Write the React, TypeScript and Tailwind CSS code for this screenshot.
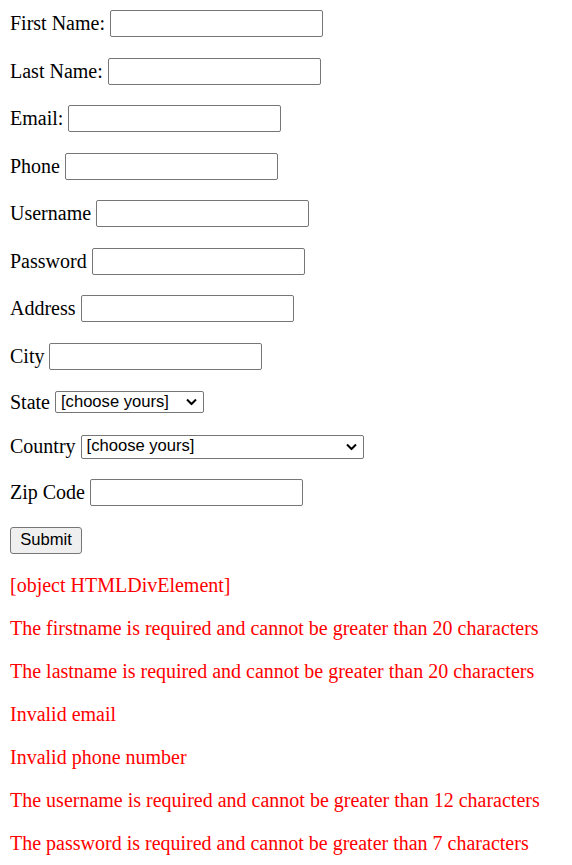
import React from 'react'

const TEXT_FIELDS = [
  'First Name:',
  'Last Name:',
  'Email:',
  'Phone',
  'Username',
  'Password',
  'Address',
  'City',
]

const ERRORS = [
  '[object HTMLDivElement]',
  'The firstname is required and cannot be greater than 20 characters',
  'The lastname is required and cannot be greater than 20 characters',
  'Invalid email',
  'Invalid phone number',
  'The username is required and cannot be greater than 12 characters',
  'The password is required and cannot be greater than 7 characters',
]

const serif = "font-['Liberation_Serif','Times_New_Roman',serif]"
const sans = "font-['Liberation_Sans',Arial,sans-serif]"

function TextInput() {
  return (
    <input
      type="text"
      className="block w-[213px] h-[27px] border border-[#767676] rounded-[2px] bg-white px-[2px] text-[16.6px] font-['Liberation_Sans',Arial,sans-serif] outline-none"
    />
  )
}

function Chevron() {
  return (
    <svg width="11" height="7" viewBox="0 0 11 7" className="absolute right-[7px] top-1/2 -translate-y-1/2 pointer-events-none">
      <path d="M1 1 L5.5 5.5 L10 1" fill="none" stroke="#000" strokeWidth="2" />
    </svg>
  )
}

function Select({ width, height }: { width: string; height: string }) {
  return (
    <div className={`relative ${width} ${height}`}>
      <select className="block appearance-none w-full h-full border border-[#767676] rounded-[2px] bg-white pl-[5px] pr-[24px] text-[16.6px] leading-none font-['Liberation_Sans',Arial,sans-serif] text-black outline-none">
        <option>[choose yours]</option>
      </select>
      <Chevron />
    </div>
  )
}

export default function App() {
  return (
    <div className={`${serif} text-[20px] text-black bg-white min-h-[865px] p-[10px] flex flex-col gap-[20px]`}>
      {TEXT_FIELDS.map((label) => (
        <div key={label} className="flex items-center gap-[5px] h-[27.5px]">
          <span className="leading-[23px]">{label}</span>
          <TextInput />
        </div>
      ))}

      <div className="flex items-center gap-[5px] h-[24.5px]">
        <span className="leading-[23px]">State</span>
        <Select width="w-[149px]" height="h-[22px]" />
      </div>

      <div className="flex items-center gap-[5px] h-[24.5px]">
        <span className="leading-[23px]">Country</span>
        <Select width="w-[283px]" height="h-[24px]" />
      </div>

      <div className="flex items-center gap-[5px] h-[27.5px]">
        <span className="leading-[23px]">Zip Code</span>
        <TextInput />
      </div>

      <div className="flex items-center h-[27px]">
        <button
          type="button"
          className={`${sans} w-[72px] h-[27px] border border-[#767676] rounded-[3px] bg-[#efefef] text-[16.6px] text-black`}
        >
          Submit
        </button>
      </div>

      {ERRORS.map((err) => (
        <div key={err} className="h-[23px] leading-[23px] text-[#ff0000] whitespace-nowrap">
          {err}
        </div>
      ))}
    </div>
  )
}
